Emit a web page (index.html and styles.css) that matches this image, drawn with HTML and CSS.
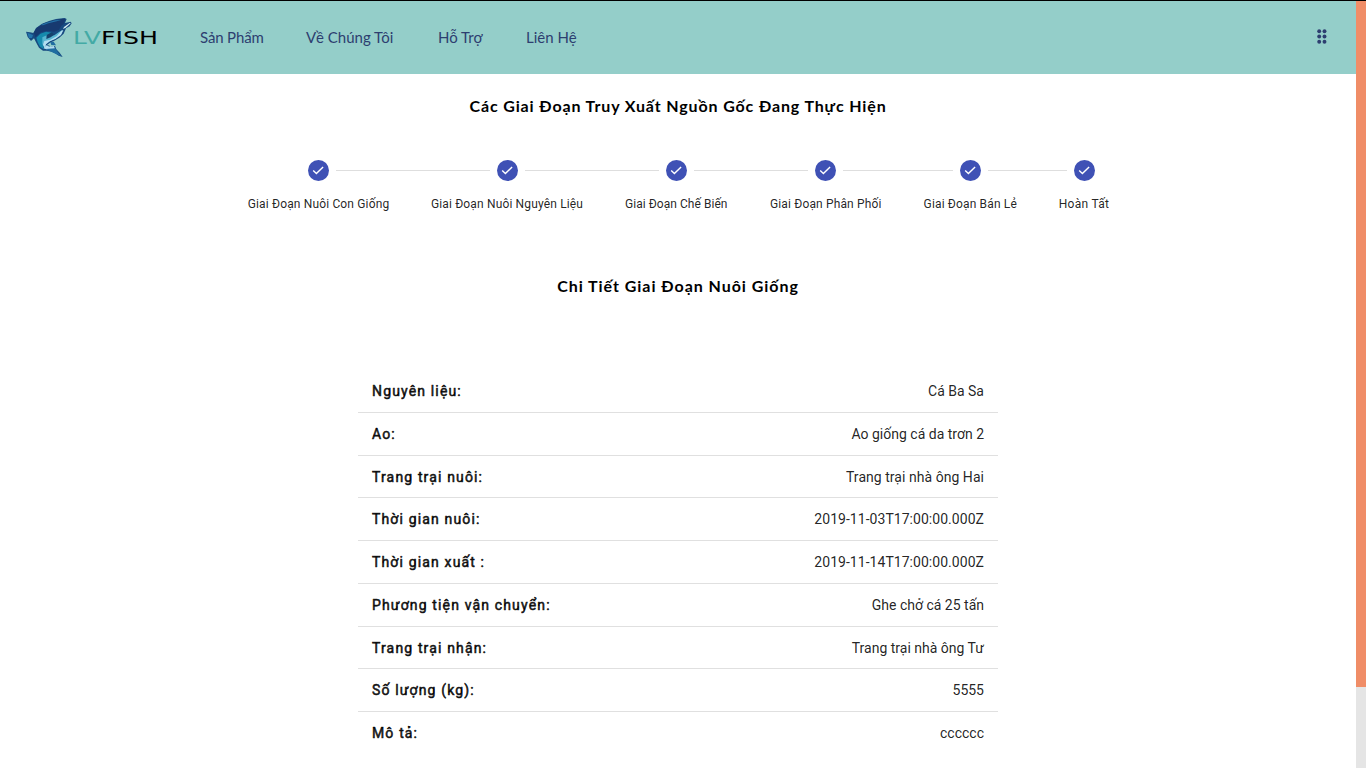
FILE: index.html
```html
<!DOCTYPE html>
<html lang="vi">
<head>
<meta charset="utf-8">
<title>LVFISH</title>
<link rel="stylesheet" href="styles.css">
</head>
<body>
<div class="app">
<div class="page">
  <header class="header">
    <a class="logo">
      <svg class="logo-fish" viewBox="6 6 138 123" width="46" height="41" aria-hidden="true">
        <path fill="#174a80" d="M6 50 18 52 28 54 36 39 54 26 75 18 96 12 122 9 128 12 123 24 140 20 143 25 137 34 126 40 119 56 106 68 91 77 78 83 68 91 93 93 97 103 107 113 116 126 104 122 92 114 83 110 69 107 57 107 45 98 36 82 30 70 21 78 11 66Z"/>
        <path fill="#173a70" d="M29 53 38 39 60 25 85 17 117 11 124 12 119 27 112 32 105 44 91 50 73 47 52 51 39 62 34 66Z"/>
        <path fill="#2375aa" d="M10 53 27 60 24 69 15 69ZM50 30 67 23 94 16 111 15 98 19 73 25 57 31Z"/>
        <path fill="#168aad" d="M37 68 49 56 66 50 84 53 80 60 68 65 60 74 56 87 60 103 48 95 41 82Z"/>
        <path fill="#58b5d1" d="M55 67 68 61 91 61 106 50 117 44 111 58 96 70 79 78 66 86 62 101 55 87Z"/>
        <path fill="#b4def0" d="M61 78 79 74 98 64 112 47 118 46 111 60 94 72 77 79 66 88 63 99 57 89Z"/>
        <path fill="#d5edf2" d="M120 36 138 23 140 25 125 38 117 42Z"/>
        <path fill="#15426d" d="M68 60 83 52 91 59 80 67 67 72Z"/>
        <path fill="#94cec9" d="M76 90 91 87 94 91 77 97Z"/>
        <path fill="#b4def0" d="M67 91 77 95 90 93 93 101 75 106 59 100Z"/>
        <path fill="#206da0" d="M79 82 89 80 96 91 82 90ZM65 102 94 100 103 113 112 124 91 115 79 109Z"/>
      </svg>
      <svg class="logo-word" width="84" height="20" aria-label="LVFISH">
        <text class="word-lv" x="-1" y="17" textLength="28" lengthAdjust="spacingAndGlyphs">LV</text>
        <text class="word-fish" x="27" y="17" textLength="57" lengthAdjust="spacingAndGlyphs">FISH</text>
      </svg>
    </a>
    <nav class="nav"><a>Sản Phẩm</a><a>Về Chúng Tôi</a><a>Hỗ Trợ</a><a>Liên Hệ</a></nav>
    <svg class="menu" viewBox="0 0 10 15" width="10" height="15" fill="#2d3e70" aria-hidden="true">
      <circle cx="2.2" cy="2.2" r="1.95"/><circle cx="7.5" cy="2.2" r="1.95"/>
      <circle cx="2.2" cy="7.5" r="1.95"/><circle cx="7.5" cy="7.5" r="1.95"/>
      <circle cx="2.2" cy="12.8" r="1.95"/><circle cx="7.5" cy="12.8" r="1.95"/>
    </svg>
  </header>
  <main class="main">
    <h1 class="title title-main">Các Giai Đoạn Truy Xuất Nguồn Gốc Đang Thực Hiện</h1>
    <ol class="stepper">
      <li class="step"><div class="track"><i class="line"></i><svg class="check" viewBox="0 0 21 21"><circle cx="10.5" cy="10.5" r="10.5"/><path d="M5.2 10.6 8.4 13.6 15.1 6.9"/></svg><i class="line"></i></div><span>Giai Đoạn Nuôi Con Giống</span></li>
      <li class="step"><div class="track"><i class="line"></i><svg class="check" viewBox="0 0 21 21"><circle cx="10.5" cy="10.5" r="10.5"/><path d="M5.2 10.6 8.4 13.6 15.1 6.9"/></svg><i class="line"></i></div><span>Giai Đoạn Nuôi Nguyên Liệu</span></li>
      <li class="step"><div class="track"><i class="line"></i><svg class="check" viewBox="0 0 21 21"><circle cx="10.5" cy="10.5" r="10.5"/><path d="M5.2 10.6 8.4 13.6 15.1 6.9"/></svg><i class="line"></i></div><span>Giai Đoạn Chế Biến</span></li>
      <li class="step"><div class="track"><i class="line"></i><svg class="check" viewBox="0 0 21 21"><circle cx="10.5" cy="10.5" r="10.5"/><path d="M5.2 10.6 8.4 13.6 15.1 6.9"/></svg><i class="line"></i></div><span>Giai Đoạn Phân Phối</span></li>
      <li class="step"><div class="track"><i class="line"></i><svg class="check" viewBox="0 0 21 21"><circle cx="10.5" cy="10.5" r="10.5"/><path d="M5.2 10.6 8.4 13.6 15.1 6.9"/></svg><i class="line"></i></div><span>Giai Đoạn Bán Lẻ</span></li>
      <li class="step"><div class="track"><i class="line"></i><svg class="check" viewBox="0 0 21 21"><circle cx="10.5" cy="10.5" r="10.5"/><path d="M5.2 10.6 8.4 13.6 15.1 6.9"/></svg><i class="line"></i></div><span>Hoàn Tất</span></li>
    </ol>
    <h2 class="title">Chi Tiết Giai Đoạn Nuôi Giống</h2>
    <dl class="details">
      <div class="row"><dt>Nguyên liệu:</dt><dd>Cá Ba Sa</dd></div>
      <div class="row"><dt>Ao:</dt><dd>Ao giống cá da trơn 2</dd></div>
      <div class="row"><dt>Trang trại nuôi:</dt><dd>Trang trại nhà ông Hai</dd></div>
      <div class="row"><dt>Thời gian nuôi:</dt><dd>2019-11-03T17:00:00.000Z</dd></div>
      <div class="row"><dt>Thời gian xuất :</dt><dd>2019-11-14T17:00:00.000Z</dd></div>
      <div class="row"><dt>Phương tiện vận chuyển:</dt><dd>Ghe chở cá 25 tấn</dd></div>
      <div class="row"><dt>Trang trại nhận:</dt><dd>Trang trại nhà ông Tư</dd></div>
      <div class="row"><dt>Số lượng (kg):</dt><dd>5555</dd></div>
      <div class="row"><dt>Mô tả:</dt><dd>cccccc</dd></div>
    </dl>
  </main>
</div>
<div class="scrollbar"><div class="thumb"></div></div>
</div>
</body>
</html>
```
FILE: styles.css
```css
* { box-sizing: border-box; }
body { margin: 0; background: #fff; overflow: hidden; font-family: Roboto, sans-serif; color: rgba(0, 0, 0, .87); }
.app { display: flex; height: 768px; border-top: 1px solid #000; }
.page { flex: 1; min-width: 0; }
.scrollbar { width: 10px; background: #e5e5e5; }
.thumb { height: 686px; background: #f08d67; }
.header { display: flex; align-items: center; height: 73px; padding: 0 29px 1px 26px; background: #94cec9; }
.logo { display: flex; align-items: center; width: 174px; gap: 2px; }
.logo-word { overflow: visible; }
.word-lv, .word-fish { font-family: "DejaVu Sans", sans-serif; font-size: 18px; }
.word-lv { fill: #43aaa5; }
.word-fish { fill: #000; }
.nav { display: grid; grid-template-columns: 106px 132px 88px auto; padding-bottom: 1px; font: 15px/24px Lato, sans-serif; color: #2d3e70; white-space: nowrap; }
.nav a:first-child { letter-spacing: -.15px; }
.menu { margin: 0 0 1px auto; }
.main { display: flex; flex-direction: column; align-items: center; }
.title { margin: 0; padding-top: 20px; font: 700 16px/24px Lato, sans-serif; letter-spacing: .96px; color: #000; }
.title-main { letter-spacing: .87px; }
.stepper { display: grid; grid-template-columns: 184.5px 192.5px 146px 153px 136px 91.5px; margin: 0; padding: 42px 0 40px; list-style: none; }
.step { font-size: 12px; line-height: 20px; letter-spacing: .15px; text-align: center; white-space: nowrap; }
.step:nth-child(3) { letter-spacing: .05px; }
.step:last-child { letter-spacing: .3px; }
.track { display: flex; align-items: center; gap: 7px; margin-bottom: 13px; }
.line { flex: 1; height: 1px; background: #dedede; }
.step:first-child .line:first-child, .step:last-child .line:last-child { background: transparent; }
.check { width: 21px; height: 21px; }
.check circle { fill: #3f51b5; }
.check path { fill: none; stroke: #fff; stroke-width: 1.4; }
.details { width: 640px; margin: 72px 0 0; }
.row { display: flex; align-items: center; justify-content: space-between; height: 42.75px; padding: .4px 14px 0; border-bottom: 1px solid #e0e0e0; font-size: 14px; line-height: 20px; }
.row:last-child { border-bottom: 0; padding-bottom: 1px; }
dt { letter-spacing: 1.15px; -webkit-text-stroke: .6px currentColor; }
dd { margin: 0; }
.row:nth-child(n+3):nth-child(-n+5) dd { letter-spacing: .04px; }
```
